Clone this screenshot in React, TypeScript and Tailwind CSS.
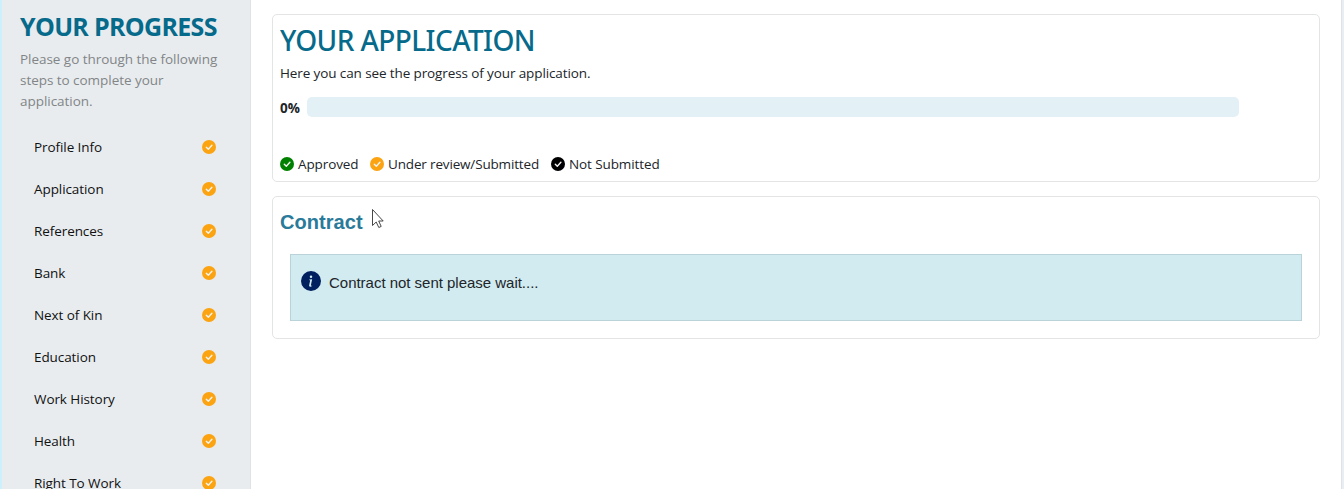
import React from "react";
import { BsInfoCircleFill } from "react-icons/bs";

const steps = [
  "Profile Info",
  "Application",
  "References",
  "Bank",
  "Next of Kin",
  "Education",
  "Work History",
  "Health",
  "Right To Work",
];

function CheckBadge({ className }: { className: string }) {
  return (
    <svg className={`size-[14px] shrink-0 ${className}`} viewBox="0 0 14 14">
      <circle cx="7" cy="7" r="7" fill="currentColor" />
      <path d="M4.3 7.2l2 2 3.6-3.9" fill="none" stroke="#f3f4f2" strokeWidth="1.4" strokeLinecap="round" strokeLinejoin="round" />
    </svg>
  );
}

function Sidebar() {
  return (
    <aside className="h-full w-[251px] shrink-0 overflow-hidden border-l-2 border-r border-l-[#ccf0fc] border-r-[#dfe3e6] bg-[#e8ecef] pl-[18px] pt-[7px]">
      <h2 className="whitespace-nowrap text-[25px] font-bold leading-[38px] tracking-[-0.68px] text-[#066a8b]">YOUR PROGRESS</h2>
      <p className="mt-1 whitespace-nowrap text-[13.5px] leading-[21px] tracking-[-0.04px] text-[#828587]">
        Please go through the following
        <br />
        steps to complete your
        <br />
        application.
      </p>
      <ul className="mt-[14px] pl-[14px] pr-[34px]">
        {steps.map((name) => (
          <li key={name} className="flex h-[42px] items-center justify-between text-[13.5px] tracking-[-0.08px] text-[#111]">
            <span>{name}</span>
            <CheckBadge className="text-[#fca311]" />
          </li>
        ))}
      </ul>
    </aside>
  );
}

function Pointer() {
  return (
    <svg className="absolute left-[371px] top-[208px]" width="14" height="21" viewBox="0 0 14 21">
      <path d="M1.5 1.5v16l3.7-3.5 2.6 5.5 2.4-1.1-2.5-5.4h4.5z" fill="#fff" stroke="#333" strokeWidth="0.9" />
    </svg>
  );
}

export default function App() {
  return (
    <div className="relative flex h-[489px] w-[1344px] overflow-hidden bg-white font-['Open_Sans','Noto_Sans',sans-serif] text-[#212529]">
      <Sidebar />
      <main className="flex min-w-0 flex-1 flex-col gap-[14px] pl-[21px] pr-[21px] pt-[14px]">
        <section className="h-[168px] rounded-[5px] border border-[#e3e4e5] px-[7px]">
          <h1 className="mt-[5px] whitespace-nowrap font-['Noto_Sans','Open_Sans',sans-serif] text-[28px] font-medium leading-[40px] tracking-[-0.58px] text-[#066a8b]">YOUR APPLICATION</h1>
          <p className="mt-[3px] text-[13.5px] leading-[21px] tracking-[-0.11px]">Here you can see the progress of your application.</p>
          <div className="mt-[13px] flex h-5 items-center">
            <span className="w-[27px] pt-[2px] text-[13.5px] font-bold">0%</span>
            <div className="h-5 w-[932px] rounded-[5px] bg-[#e3f0f6]" />
          </div>
          <div className="mt-[37px] flex h-5 items-center whitespace-nowrap text-[13.5px] tracking-[-0.1px]">
            <div className="flex w-[90px] items-center gap-1">
              <CheckBadge className="text-[#008000]" />
              <span>Approved</span>
            </div>
            <div className="flex w-[181px] items-center gap-1">
              <CheckBadge className="text-[#fca311]" />
              <span className="tracking-[-0.16px]">Under review/Submitted</span>
            </div>
            <div className="flex items-center gap-1">
              <CheckBadge className="text-black" />
              <span>Not Submitted</span>
            </div>
          </div>
        </section>
        <section className="h-[143px] rounded-[5px] border border-[#e3e4e5] px-[7px] font-['Liberation_Sans',sans-serif]">
          <h2 className="mt-[10px] text-[20px] font-bold leading-[30px] tracking-[0.05px] text-[#2a7a9a]">Contract</h2>
          <div className="mx-[10px] mt-[17px] flex h-[67px] border border-[#b9d3d9] bg-[#d1ebf0] pl-[10px] pt-4">
            <BsInfoCircleFill className="size-5 shrink-0 text-[#00205f]" />
            <span className="ml-2 mt-[2px] text-[15px] leading-5 tracking-[-0.02px]">Contract not sent please wait....</span>
          </div>
        </section>
      </main>
      <div className="w-[3px] shrink-0 border-l border-[#dfe3e6] bg-[#e8eef1]" />
      <Pointer />
    </div>
  );
}
